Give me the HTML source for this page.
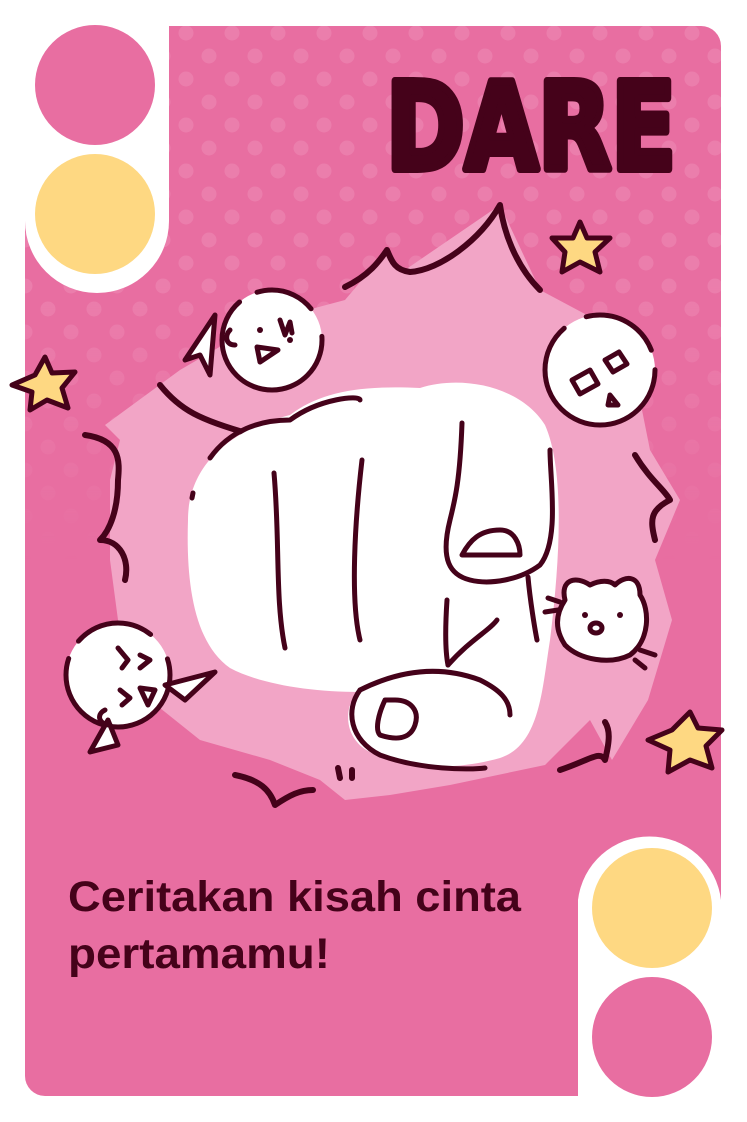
<!DOCTYPE html>
<html><head><meta charset="utf-8"><style>
html,body{margin:0;padding:0;background:#fff;width:747px;height:1122px;overflow:hidden}
svg{display:block}
</style></head><body>
<svg width="747" height="1122" viewBox="0 0 747 1122" xmlns="http://www.w3.org/2000/svg">
<defs>
<pattern id="dots" width="46" height="46" patternUnits="userSpaceOnUse" x="163" y="10">
<circle cx="23" cy="23" r="7.5" fill="#eb7eac"/>
<circle cx="0" cy="0" r="7.5" fill="#eb7eac"/><circle cx="46" cy="0" r="7.5" fill="#eb7eac"/>
<circle cx="0" cy="46" r="7.5" fill="#eb7eac"/><circle cx="46" cy="46" r="7.5" fill="#eb7eac"/>
</pattern>
<linearGradient id="fade" x1="0" y1="0" x2="0" y2="1"><stop offset="0" stop-color="#fff"/><stop offset="0.5" stop-color="#fff"/><stop offset="1" stop-color="#000"/></linearGradient>
<mask id="m"><rect x="0" y="0" width="747" height="560" fill="url(#fade)"/></mask>
<clipPath id="card"><rect x="25" y="26" width="696" height="1070" rx="20"/></clipPath>
</defs>
<g clip-path="url(#card)">
<rect x="25" y="26" width="696" height="1070" fill="#e86ea1"/>
<rect x="25" y="26" width="696" height="560" fill="url(#dots)" mask="url(#m)"/>
</g>
<path d="M25 26 H169 V221 A72 72 0 0 1 25 221 Z" fill="#fff"/>
<path d="M721 1096 H578 V900 A72 72 0 0 1 721 900 Z" fill="#fff"/>
<circle cx="95" cy="85" r="60" fill="#e86ea1"/>
<circle cx="95" cy="214" r="60" fill="#fed882"/>
<circle cx="652" cy="908" r="60" fill="#fed882"/>
<circle cx="652" cy="1037" r="60" fill="#e86ea1"/>

<text x="386" y="169" textLength="290" lengthAdjust="spacingAndGlyphs" font-family="DejaVu Sans, Liberation Sans, sans-serif" font-weight="bold" font-size="120" fill="#45021a" stroke="#45021a" stroke-width="8" stroke-linejoin="round">DARE</text>

<path d="M345 300 L387 250 L402 272 L500 205 L540 290 L600 322 L640 400 L650 450 L680 500 L655 560 L672 620 L648 700 L612 760 L590 720 L545 765 L450 785 L390 795 L345 800 L320 780 L270 760 L200 740 L150 700 L118 620 L110 560 L110 480 L120 440 L105 425 L180 370 L240 335 L300 312 Z" fill="#f2a5c6"/>
<g fill="none" stroke="#45021a" stroke-width="6" stroke-linecap="round" stroke-linejoin="round">
<path d="M345 287 C370 275 380 260 387 250 C392 262 395 270 410 272 C440 270 480 240 500 205 C505 240 520 270 540 290"/>
<path d="M250 434 C200 420 180 410 160 385"/>
<path d="M85 435 C120 440 120 460 118 480 C118 510 110 530 100 540 C120 540 130 560 125 580"/>
<path d="M635 455 C650 480 665 490 670 500 C650 510 650 520 655 540"/>
<path d="M560 770 C590 760 600 750 605 760 C610 740 610 730 605 722"/>
<path d="M235 775 C260 780 270 790 275 805 C290 795 300 790 313 790"/>
<path d="M338 768 L340 778 M352 770 L352 778"/>
</g>

<path d="M188 520 C188 465 230 430 290 415 C320 392 360 385 420 388 C460 375 520 385 545 425 C565 470 560 560 550 640 C542 690 540 745 500 758 C450 772 400 768 370 752 C340 737 345 700 360 692 C310 692 260 684 230 668 C193 642 186 580 188 520 Z" fill="#fff"/>
<g fill="none" stroke="#45021a" stroke-width="5" stroke-linecap="round" stroke-linejoin="round">
<path d="M210 458 C230 430 260 420 290 420 C320 398 360 395 360 400"/>
<path d="M193 493 L192 498"/>
<path d="M274 473 C280 540 275 600 285 648"/>
<path d="M362 460 C355 520 350 600 360 640"/>
<path d="M462 423 C460 480 455 500 450 520 C440 560 450 575 470 580 C490 585 520 580 540 565 C560 540 550 480 550 450"/>
<path d="M462 555 C470 540 480 530 500 530 C515 530 520 545 520 555 Z"/>
<path d="M447 600 C445 630 445 650 448 665"/>
<path d="M528 577 C530 600 535 630 537 640"/>
<path d="M448 665 C470 640 490 630 497 620"/>
<path d="M360 690 C400 670 440 665 480 680 C500 690 510 700 510 715"/>
<path d="M360 690 C345 710 350 740 380 755 C420 770 470 770 485 768"/>
<path d="M385 700 C378 715 375 730 380 735 C395 740 410 740 415 725 C420 710 410 700 395 700 Z"/>
</g>

<g stroke="#45021a" stroke-width="5" stroke-linecap="round" stroke-linejoin="round">
<circle cx="272" cy="340" r="50" fill="#fff" stroke-dasharray="200 20 60 30"/>
<path d="M215 315 L185 360 L200 355 L210 375 Z" fill="#fff"/>
<path d="M260 362 L257 347 L278 350 Z" fill="none"/>
<path d="M230 330 C225 335 225 345 235 345 M280 320 L285 335 L290 322 L292 333" fill="none"/>
<circle cx="600" cy="370" r="55" fill="#fff" stroke-dasharray="220 25 80 20"/>
<path d="M572 380 l18 -10 l8 14 l-18 10 z M605 360 l14 -8 l8 12 l-14 8 z M610 395 l8 10 l-10 0 z" fill="none"/>
<circle cx="118" cy="675" r="52" fill="#fff" stroke-dasharray="180 20 80 30"/>
<path d="M165 685 L215 672 L185 700 Z M108 720 L90 752 L118 745 Z" fill="#fff"/>
<path d="M118 648 L128 660 L122 668 M140 655 L150 660 L140 668 M140 688 L148 705 L155 690 Z M120 690 L130 698 L122 705 M105 710 C95 715 100 725 110 725" fill="none"/>
<path d="M565 600 C560 580 575 575 590 585 C600 580 610 580 615 585 C625 575 640 575 640 595 C650 610 650 640 630 655 C610 665 580 660 565 645 C555 630 555 615 565 600 Z" fill="#fff"/>
<path d="M590 628 a6 5 0 1 0 12 0 a6 5 0 1 0 -12 0 M548 598 L560 602 M545 612 L558 610 M640 650 L655 655 M635 660 L645 668" fill="none"/>
</g>
<g fill="#45021a"><circle cx="585" cy="615" r="3"/><circle cx="620" cy="615" r="3"/><circle cx="260" cy="330" r="3"/><circle cx="290" cy="340" r="3"/></g>

<g fill="#fed882" stroke="#45021a" stroke-width="5" stroke-linejoin="round">
<path d="M580 222 L587 238 L610 238 L595 252 L600 272 L580 262 L562 272 L565 252 L552 238 L573 238 Z"/>
<path d="M45 357 L52 373 L75 372 L62 388 L68 408 L47 400 L30 410 L32 392 L12 385 L35 375 Z"/>
<path d="M690 712 L698 728 L722 730 L706 746 L712 768 L690 760 L668 772 L670 750 L648 740 L672 730 Z"/>
</g>

<text x="68" y="911" textLength="453" lengthAdjust="spacingAndGlyphs" font-family="Liberation Sans, sans-serif" font-weight="bold" font-size="43" fill="#45021a">Ceritakan kisah cinta</text>
<text x="68" y="968" textLength="262" lengthAdjust="spacingAndGlyphs" font-family="Liberation Sans, sans-serif" font-weight="bold" font-size="43" fill="#45021a">pertamamu!</text>
</svg>
</body></html>
